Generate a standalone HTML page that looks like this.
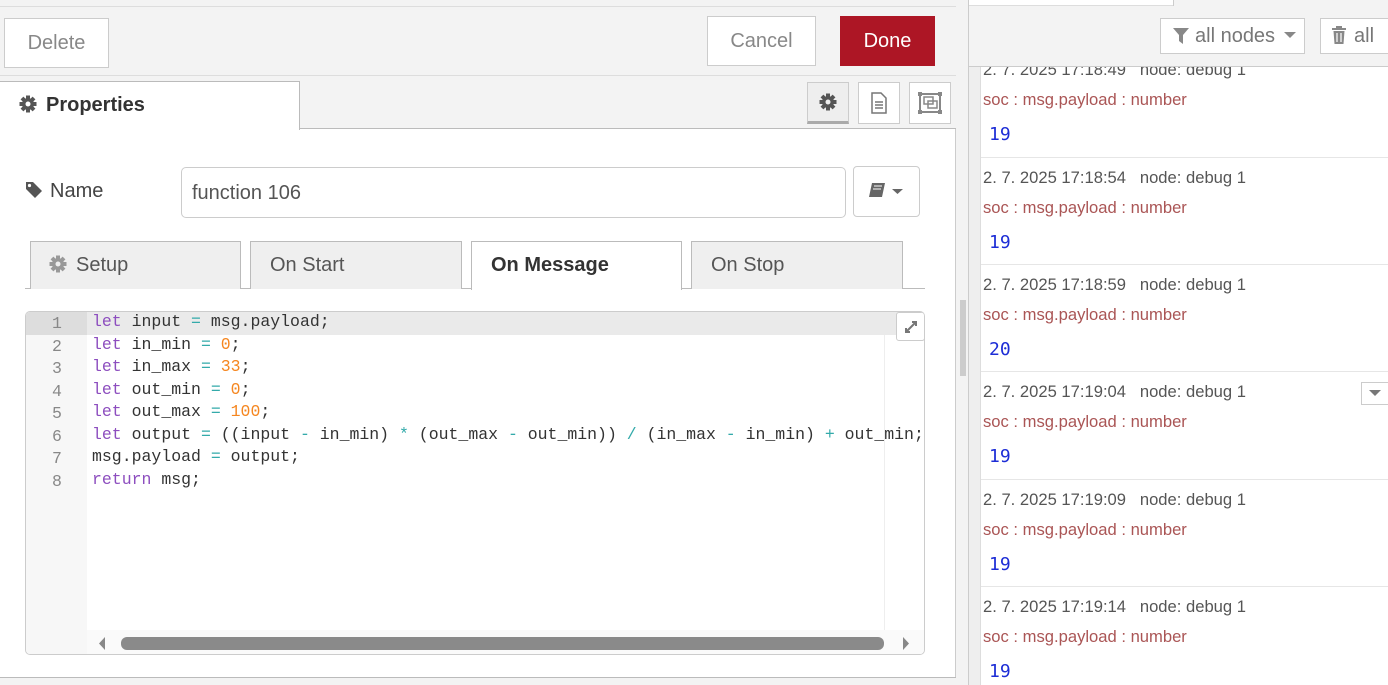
<!DOCTYPE html>
<html><head><meta charset="utf-8"><style>
*{box-sizing:border-box;margin:0;padding:0}
html,body{width:1388px;height:685px;overflow:hidden}
body{background:#f3f3f3;font-family:"Liberation Sans",sans-serif;position:relative}
.a{position:absolute}
.btn{position:absolute;background:#fff;border:1px solid #ccc;color:#888;font-size:20px;text-align:center}
.tab{position:absolute;top:241px;height:48px;background:#efefef;border:1px solid #bbb;border-bottom:none;font-size:20px;color:#555;padding:12px 0 0 19px}
.code{font-family:"Liberation Mono",monospace;font-size:16.5px;line-height:22.5px;white-space:pre;color:#333}
.k{color:#8d4ebf}.n{color:#f5861f}.o{color:#3aa}
.ln{font-family:"Liberation Mono",monospace;font-size:16.5px;line-height:22.5px;color:#888;text-align:center;width:62px}
.ent{position:absolute;left:0;width:407px;height:107px;border-top:1px solid #e6e6e6;background:#fff}
.ts{position:absolute;left:2px;top:10px;font-size:16.6px;color:#555}
.soc{position:absolute;left:2px;top:40px;font-size:16.6px;color:#aa5555}
.val{position:absolute;left:8px;top:74px;font-family:"DejaVu Sans Mono",monospace;font-size:18px;color:#1d2dd6}
</style></head><body>
<svg width="0" height="0" style="position:absolute"><defs><g id="gear"><g><rect x="8" y="1.5" width="4" height="17"/><rect x="8" y="1.5" width="4" height="17" transform="rotate(45 10 10)"/><rect x="8" y="1.5" width="4" height="17" transform="rotate(90 10 10)"/><rect x="8" y="1.5" width="4" height="17" transform="rotate(135 10 10)"/><circle cx="10" cy="10" r="6"/></g></g></defs></svg>
<!-- left panel -->
<div class="a" style="left:0;top:0;width:956px;height:685px;background:#fff;border-right:1px solid #ccc"></div>
<div class="a" style="left:0;top:0;width:956px;height:75px;background:#f3f3f3"></div>
<div class="a" style="left:0;top:6px;width:956px;height:1px;background:#ddd"></div>
<div class="a" style="left:0;top:75px;width:956px;height:1px;background:#ddd"></div>
<div class="btn" style="left:4px;top:18px;width:105px;height:50px;line-height:48px">Delete</div>
<div class="btn" style="left:707px;top:16px;width:109px;height:50px;line-height:48px">Cancel</div>
<div class="btn" style="left:840px;top:16px;width:95px;height:50px;line-height:48px;background:#ad1625;border-color:#ad1625;color:#fff">Done</div>
<!-- properties tab row -->
<div class="a" style="left:0;top:76px;width:956px;height:53px;background:#f3f3f3;border-bottom:1px solid #bbb"></div>
<div class="a" style="left:0;top:81px;width:300px;height:49px;background:#fff;border:1px solid #bbb;border-bottom:none;border-left:none;font-size:20px;font-weight:bold;color:#333;padding:12px 0 0 46px">Properties</div>
<svg class="a" style="left:18px;top:94px" width="20" height="20" viewBox="0 0 20 20"><use href="#gear" fill="#555"/><circle cx="10" cy="10" r="2.5" fill="#fff"/></svg>
<div class="a" style="left:807px;top:82px;width:42px;height:42px;background:#eee;border:1px solid #ccc;border-bottom:3px solid #aaa"></div>
<svg class="a" style="left:818px;top:92px" width="20" height="20" viewBox="0 0 20 20"><use href="#gear" fill="#555"/><circle cx="10" cy="10" r="2.5" fill="#eee"/></svg>
<div class="a" style="left:858px;top:82px;width:42px;height:42px;background:#fff;border:1px solid #ccc"></div>
<svg class="a" style="left:869px;top:92px" width="20" height="22" viewBox="0 0 20 22"><path d="M3 1h9l5 5v15H3z" fill="none" stroke="#777" stroke-width="1.5"/><path d="M6 10h8M6 13h8M6 16h8" stroke="#777" stroke-width="1.5"/></svg>
<div class="a" style="left:909px;top:82px;width:42px;height:42px;background:#fff;border:1px solid #ccc"></div>
<svg class="a" style="left:917px;top:91px" width="26" height="24" viewBox="0 0 26 24"><rect x="3" y="3" width="20" height="18" fill="none" stroke="#888" stroke-width="2"/><rect x="7" y="6" width="9" height="7" fill="none" stroke="#888" stroke-width="1.5"/><rect x="11" y="10" width="9" height="7" fill="none" stroke="#888" stroke-width="1.5"/><g fill="#888"><rect x="1" y="1" width="4" height="4"/><rect x="21" y="1" width="4" height="4"/><rect x="1" y="19" width="4" height="4"/><rect x="21" y="19" width="4" height="4"/></g></svg>
<!-- name row -->
<svg class="a" style="left:25px;top:181px" width="20" height="18" viewBox="0 0 20 18"><path d="M1 1h7l9 9-7 7-9-9z" fill="#555"/><circle cx="4.5" cy="4.5" r="1.6" fill="#fff"/></svg>
<div class="a" style="left:50px;top:180px;font-size:20px;color:#444">Name</div>
<div class="a" style="left:181px;top:167px;width:665px;height:51px;border:1px solid #ccc;border-radius:5px;font-size:20px;color:#555;padding:14px 0 0 10px">function 106</div>
<div class="a" style="left:853px;top:166px;width:67px;height:51px;border:1px solid #ccc;border-radius:4px;background:#fff"></div>
<svg class="a" style="left:867px;top:181px" width="40" height="20" viewBox="0 0 40 20"><path d="M5 2h13l-3 14H2z" fill="#666"/><path d="M7 5h8M6 8h8" stroke="#fff" stroke-width="1"/><path d="M25 8h11l-5.5 5z" fill="#666"/></svg>
<!-- tabs -->
<div class="a" style="left:25px;top:288px;width:900px;height:1px;background:#bbb"></div>
<div class="tab" style="left:30px;width:211px;padding-left:45px">Setup</div>
<svg class="a" style="left:48px;top:254px" width="20" height="20" viewBox="0 0 20 20"><use href="#gear" fill="#999"/><circle cx="10" cy="10" r="2.5" fill="#efefef"/></svg>
<div class="tab" style="left:250px;width:212px">On Start</div>
<div class="tab" style="left:471px;width:211px;background:#fff;font-weight:bold;color:#333;height:49px">On Message</div>
<div class="tab" style="left:691px;width:212px">On Stop</div>
<!-- editor -->
<div class="a" style="left:25px;top:311px;width:900px;height:344px;border:1px solid #ccc;border-radius:5px;overflow:hidden;background:#fff">
 <div class="a" style="left:0;top:0;width:61px;height:344px;background:#f7f7f7"></div>
 <div class="a" style="left:0;top:0;width:900px;height:23px;background:#eaeaea"></div>
 <div class="a" style="left:0;top:0;width:61px;height:23px;background:#ddd"></div>
 <div class="a ln" style="left:0;top:1px">1<br>2<br>3<br>4<br>5<br>6<br>7<br>8</div>
 <div class="a code" style="left:66px;top:-1px"><span class="k">let</span> input <span class="o">=</span> msg.payload;
<span class="k">let</span> in_min <span class="o">=</span> <span class="n">0</span>;
<span class="k">let</span> in_max <span class="o">=</span> <span class="n">33</span>;
<span class="k">let</span> out_min <span class="o">=</span> <span class="n">0</span>;
<span class="k">let</span> out_max <span class="o">=</span> <span class="n">100</span>;
<span class="k">let</span> output <span class="o">=</span> ((input <span class="o">-</span> in_min) <span class="o">*</span> (out_max <span class="o">-</span> out_min)) <span class="o">/</span> (in_max <span class="o">-</span> in_min) <span class="o">+</span> out_min;
msg.payload <span class="o">=</span> output;
<span class="k">return</span> msg;</div>
 <div class="a" style="left:858px;top:23px;width:1px;height:300px;background:#eee"></div>
 <div class="a" style="left:870px;top:0;width:29px;height:29px;background:#fff;border:1px solid #ccc;border-radius:3px"></div>
 <svg class="a" style="left:877px;top:7px" width="16" height="16" viewBox="0 0 16 16"><path d="M3 13L13 3M9 3h4v4M3 9v4h4" stroke="#777" stroke-width="2" fill="none"/></svg>
 <div class="a" style="left:61px;top:318px;width:838px;height:26px;background:#fafafa"></div>
 <div class="a" style="left:95px;top:325px;width:763px;height:13px;background:#8a8a8a;border-radius:6px"></div>
 <svg class="a" style="left:70px;top:324px" width="12" height="15"><path d="M9 1L3 7.5 9 14z" fill="#888"/></svg>
 <svg class="a" style="left:874px;top:324px" width="12" height="15"><path d="M3 1l6 6.5L3 14z" fill="#888"/></svg>
</div>
<div class="a" style="left:0;top:677px;width:956px;height:8px;background:#f3f3f3;border-top:1px solid #bbb"></div>
<!-- splitter -->
<div class="a" style="left:960px;top:300px;width:6px;height:76px;background:#ccc"></div>
<div class="a" style="left:968px;top:0;width:1px;height:685px;background:#ccc"></div>
<!-- right panel -->
<div class="a" style="left:969px;top:0;width:419px;height:6px;background:#fff;border-bottom:1px solid #ddd"></div>
<div class="a" style="left:1173px;top:0;width:215px;height:6px;border-left:1px solid #ccc;background:#f3f3f3"></div>
<div class="btn" style="left:1160px;top:18px;width:145px;height:36px;line-height:34px;color:#777;text-align:left;padding-left:34px">all nodes</div>
<svg class="a" style="left:1172px;top:27px" width="18" height="18" viewBox="0 0 18 18"><path d="M1 1h16l-6 7v9l-4-3V8z" fill="#888"/></svg>
<svg class="a" style="left:1284px;top:32px" width="12" height="8"><path d="M0 0h12L6 6z" fill="#888"/></svg>
<div class="btn" style="left:1320px;top:18px;width:80px;height:36px;line-height:34px;color:#777;text-align:left;padding-left:33px">all</div>
<svg class="a" style="left:1332px;top:26px" width="14" height="18" viewBox="0 0 14 18"><path d="M0 3h14M5 3V1h4v2" stroke="#888" stroke-width="2" fill="none"/><path d="M1.5 5h11l-1 13h-9z" fill="#888"/><path d="M5 7v9M9 7v9" stroke="#fff" stroke-width="1.2"/></svg>
<div class="a" style="left:969px;top:66px;width:419px;height:1px;background:#ccc"></div>
<div class="a" style="left:969px;top:67px;width:12px;height:618px;background:#eee;border-right:1px solid #ddd"></div>
<div class="a" style="left:981px;top:67px;width:407px;height:618px;background:#fff;overflow:hidden">
<div class="ent" style="top:-17px;border-top:none"><div class="ts">2. 7. 2025 17:18:49 &nbsp;&nbsp;node: debug 1</div><div class="soc">soc : msg.payload : number</div><div class="val">19</div></div>
<div class="ent" style="top:90px"><div class="ts">2. 7. 2025 17:18:54 &nbsp;&nbsp;node: debug 1</div><div class="soc">soc : msg.payload : number</div><div class="val">19</div></div>
<div class="ent" style="top:197px"><div class="ts">2. 7. 2025 17:18:59 &nbsp;&nbsp;node: debug 1</div><div class="soc">soc : msg.payload : number</div><div class="val">20</div></div>
<div class="ent" style="top:304px"><div class="ts">2. 7. 2025 17:19:04 &nbsp;&nbsp;node: debug 1</div><div class="soc">soc : msg.payload : number</div><div class="val">19</div>
<div class="a" style="left:380px;top:10px;width:28px;height:23px;border:1px solid #ccc;background:#fff"></div><svg class="a" style="left:388px;top:18px" width="12" height="7"><path d="M0 0h12L6 6z" fill="#777"/></svg></div>
<div class="ent" style="top:412px"><div class="ts">2. 7. 2025 17:19:09 &nbsp;&nbsp;node: debug 1</div><div class="soc">soc : msg.payload : number</div><div class="val">19</div></div>
<div class="ent" style="top:519px"><div class="ts">2. 7. 2025 17:19:14 &nbsp;&nbsp;node: debug 1</div><div class="soc">soc : msg.payload : number</div><div class="val">19</div></div>
</div>
</body></html>
